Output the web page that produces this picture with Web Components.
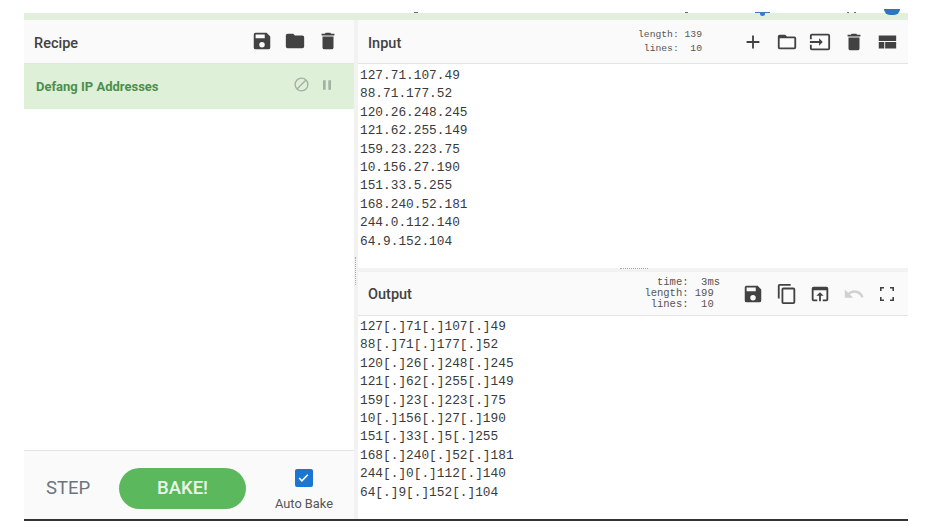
<!DOCTYPE html>
<html>
<head>
<meta charset="utf-8">
<title>CyberChef</title>
<style>
html, body { margin: 0; padding: 0; background: #fff; }
body { width: 940px; height: 529px; overflow: hidden; font-family: Roboto, sans-serif; }
</style>
</head>
<body>
<cc-app></cc-app>
<script>
const ICONS = {
    save: `<path d="M17 3H5a2 2 0 0 0-2 2v14a2 2 0 0 0 2 2h14a2 2 0 0 0 2-2V7l-4-4zm-5 16a3 3 0 1 1 0-6 3 3 0 0 1 0 6zm3-10H5V5h10v4z"/>`,
    folder: `<path d="M10 4H4a2 2 0 0 0-2 2v12a2 2 0 0 0 2 2h16a2 2 0 0 0 2-2V8a2 2 0 0 0-2-2h-8l-2-2z"/>`,
    delete: `<path d="M6 19a2 2 0 0 0 2 2h8a2 2 0 0 0 2-2V7H6v12zM19 4h-3.500l-1-1h-5l-1 1H5v2h14V4z"/>`,
    block: `<path d="M12 2a10 10 0 1 0 0 20 10 10 0 0 0 0-20zM4 12a8 8 0 0 1 8-8c1.850 0 3.550.630 4.900 1.690L5.690 16.900A7.900 7.900 0 0 1 4 12zm8 8a7.900 7.900 0 0 1-4.900-1.690L18.310 7.100A7.900 7.900 0 0 1 20 12a8 8 0 0 1-8 8z"/>`,
    pause: `<path d="M6 19h4V5H6v14zm8-14v14h4V5h-4z"/>`,
    add: `<path d="M19 13h-6v6h-2v-6H5v-2h6V5h2v6h6v2z"/>`,
    folderOpen: `<path d="M20 6h-8l-2-2H4a2 2 0 0 0-2 2v12a2 2 0 0 0 2 2h16a2 2 0 0 0 2-2V8a2 2 0 0 0-2-2zm0 12H4V8h16v10z"/>`,
    input: `<path d="M21 3.010H3a2 2 0 0 0-2 2V9h2V4.990h18v14.030H3V15H1v4.010a2 2 0 0 0 2 1.980h18a2 2 0 0 0 2-1.980v-14a2 2 0 0 0-2-2zM11 16l4-4-4-4v3H1v2h10v3z"/>`,
    layout: `<path d="M3 19h6v-7H3v7zm7 0h12v-7H10v7zM3 5v6h19V5H3z"/>`,
    copy: `<path d="M16 1H4a2 2 0 0 0-2 2v14h2V3h12V1zm3 4H8a2 2 0 0 0-2 2v14a2 2 0 0 0 2 2h11a2 2 0 0 0 2-2V7a2 2 0 0 0-2-2zm0 16H8V7h11v14z"/>`,
    openBrowser: `<path d="M19 4H5a2 2 0 0 0-2 2v12a2 2 0 0 0 2 2h4v-2H5V8h14v10h-4v2h4a2 2 0 0 0 2-2V6a2 2 0 0 0-2-2zm-7 6-4 4h3v6h2v-6h3l-4-4z"/>`,
    undo: `<path d="M12.500 8c-2.650 0-5.050.990-6.900 2.600L2 7v9h9l-3.620-3.620A7.950 7.950 0 0 1 12.500 10.500c3.540 0 6.550 2.310 7.600 5.500l2.370-.780C21.080 11.030 17.150 8 12.500 8z"/>`,
    fullscreen: `<path d="M5 15h1.600v2.400H9V19H5v-4zM5 9V5h4v1.600H6.600V9H5zM19 15v4h-4v-1.600h2.400V15H19zM15 5h4v4h-1.600V6.600H15V5z"/>`
};

class CcIcon extends HTMLElement {
    constructor() {
        super();
        this.attachShadow({mode: "open"});
    }
    connectedCallback() {
        const size = this.getAttribute("size") || 24;
        const path = ICONS[this.getAttribute("name")] || "";
        this.shadowRoot.innerHTML = `
            <style>
                :host { display: inline-flex; width: ${size}px; height: ${size}px; color: inherit; }
                svg { width: 100%; height: 100%; fill: currentColor; display: block; }
            </style>
            <svg viewBox="0 0 24 24">${path}</svg>`;
    }
}
customElements.define("cc-icon", CcIcon);

// header row shared by recipe, input and output
class CcPaneHeader extends HTMLElement {
    constructor() {
        super();
        this.attachShadow({mode: "open"});
        this.shadowRoot.innerHTML = `
            <style>
                :host {
                    display: flex;
                    align-items: center;
                    box-sizing: border-box;
                    height: 44px;
                    padding-left: 10px;
                    background: #fafafa;
                    border-bottom: 1px solid #e4e4e4;
                    color: #424242;
                }
                .title {
                    font: 500 14.500px Roboto, sans-serif;
                    flex: 1;
                    position: relative;
                    top: 1px;
                }
                :host([low]) .title { top: 2px; }
                .actions { display: flex; align-items: center; }
            </style>
            <div class="title"><slot name="title"></slot></div>
            <slot name="info"></slot>
            <div class="actions"><slot></slot></div>`;
    }
}
customElements.define("cc-pane-header", CcPaneHeader);

class CcIoInfo extends HTMLElement {
    constructor() {
        super();
        this.attachShadow({mode: "open"});
        this.shadowRoot.innerHTML = `
            <style>
                :host {
                    display: block;
                    font-family: "Liberation Mono", monospace;
                    color: #555;
                    text-align: left;
                }
                slot { white-space: pre; }
            </style>
            <slot></slot>`;
    }
}
customElements.define("cc-io-info", CcIoInfo);

class CcTextPane extends HTMLElement {
    constructor() {
        super();
        this.attachShadow({mode: "open"});
        this.shadowRoot.innerHTML = `
            <style>
                :host {
                    display: block;
                    padding: 2px 0 0 2px;
                    font: 12.800px/18.400px "Liberation Mono", monospace;
                    color: #3a3a3a;
                    overflow: hidden;
                    box-sizing: border-box;
                }
                slot { white-space: pre; }
            </style>
            <slot></slot>`;
    }
}
customElements.define("cc-text-pane", CcTextPane);

class CcOperation extends HTMLElement {
    constructor() {
        super();
        this.attachShadow({mode: "open"});
        this.shadowRoot.innerHTML = `
            <style>
                :host {
                    display: flex;
                    align-items: center;
                    box-sizing: border-box;
                    height: 45px;
                    padding: 0 19px 0 12px;
                    background: #dff0d8;
                    color: #4c8f4d;
                }
                .name { flex: 1; font: 700 13px Roboto, sans-serif; }
                .ctl { display: flex; align-items: center; gap: 9px; color: #a3b0a3; position: relative; top: -2px; }
            </style>
            <div class="name"><slot></slot></div>
            <div class="ctl">
                <cc-icon name="block" size="17"></cc-icon>
                <cc-icon name="pause" size="16"></cc-icon>
            </div>`;
    }
}
customElements.define("cc-operation", CcOperation);

class CcControls extends HTMLElement {
    constructor() {
        super();
        this.attachShadow({mode: "open"});
        this.shadowRoot.innerHTML = `
            <style>
                :host {
                    display: flex;
                    align-items: center;
                    box-sizing: border-box;
                    height: 69px;
                    padding: 6px 0 0 22px;
                    background: #fafafa;
                    border-top: 1px solid #e4e4e4;
                }
                .step {
                    font: 400 18.500px Roboto, sans-serif;
                    color: #6c757d;
                    width: 73px;
                }
                .bake {
                    display: flex;
                    align-items: center;
                    justify-content: center;
                    width: 127px;
                    height: 41px;
                    border-radius: 21px;
                    background: #5cb85c;
                    color: #e8f5e8;
                    font: 500 18.500px Roboto, sans-serif;
                    box-sizing: border-box;
                }
                .auto {
                    display: flex;
                    flex-direction: column;
                    align-items: center;
                    margin: 3px 0 0 29px;
                    font: 400 12.800px Roboto, sans-serif;
                    color: #555;
                    gap: 9px;
                }
                .box {
                    width: 18px;
                    height: 18px;
                    border-radius: 2px;
                    background: #1976d2;
                    display: flex;
                    align-items: center;
                    justify-content: center;
                }
                .box svg { width: 13px; height: 13px; fill: none; stroke: #fff; stroke-width: 3; }
            </style>
            <div class="step">STEP</div>
            <div class="bake">BAKE!</div>
            <div class="auto">
                <div class="box"><svg viewBox="0 0 24 24"><path d="M4 13l5 5L20 7"/></svg></div>
                <div>Auto Bake</div>
            </div>`;
    }
}
customElements.define("cc-controls", CcControls);

class CcApp extends HTMLElement {
    constructor() {
        super();
        this.attachShadow({mode: "open"});
        const input = "127.71.107.49\n88.71.177.52\n120.26.248.245\n121.62.255.149\n159.23.223.75\n10.156.27.190\n151.33.5.255\n168.240.52.181\n244.0.112.140\n64.9.152.104";
        const output = input.replace(/\./g, "[.]");
        this.shadowRoot.innerHTML = `
            <style>
                :host { display: block; width: 884px; margin-left: 24px; }
                .strip { height: 13px; position: relative; }
                .strip i { position: absolute; display: block; background: #5d6f80; height: 1px; top: 12px; }
                .strip i.blue { background: #3b7cc0; }
                .band { height: 7px; background: #e2efdc; }
                .main {
                    display: grid;
                    grid-template-columns: 330px 4px 1fr;
                    height: 499px;
                    border-bottom: 2px solid #333;
                }
                .col { display: flex; flex-direction: column; min-height: 0; min-width: 0; }
                .spacer { flex: 1; }
                .gutter { background: #f2f2f2; position: relative; }
                .gutter::after {
                    content: "";
                    position: absolute;
                    left: 1px;
                    top: 237px;
                    height: 28px;
                    border-left: 1px dotted #aaa;
                }
                .input { height: 204px; padding-top: 3px; }
                .divider {
                    height: 4px;
                    background: #f2f2f2;
                    position: relative;
                }
                .divider::after {
                    content: "";
                    position: absolute;
                    left: 262px;
                    top: 0;
                    width: 28px;
                    border-top: 1px dotted #aaa;
                }
                .output { flex: 1; padding-top: 2px; }
                .recipe-actions { display: flex; gap: 11px; padding-right: 15px; align-items: center; position: relative; top: -1px; }
                .input-actions { display: flex; gap: 11.500px; padding-right: 10px; margin-left: 40px; align-items: center; }
                .output-actions { display: flex; gap: 11.500px; padding-right: 10px; margin-left: 22px; align-items: center; }
                .dim { color: #d0d0d0; }
                .wide { margin: 0 -1px; }
                #iinfo { font-size: 9.700px; line-height: 14px; margin-top: 1px; }
                #oinfo { font-size: 10.500px; line-height: 11px; }
            </style>
            <div class="strip">
                <i style="left:390px;width:4px"></i>
                <i style="left:661px;width:3px"></i>
                <i class="blue" style="left:731px;width:15px"></i>
                <i class="blue" style="left:736px;top:13px;width:5px;height:3px;border-radius:0 0 3px 3px"></i>
                <i style="left:823px;width:2px"></i>
                <i style="left:830px;width:2px"></i>
                <i class="blue" style="left:860px;top:9px;width:16px;height:6px;border-radius:0 0 9px 9px;background:#2f74bd"></i>
            </div>
            <div class="band"></div>
            <div class="main">
                <div class="col">
                    <cc-pane-header low>
                        <span slot="title">Recipe</span>
                        <div class="recipe-actions">
                            <cc-icon name="save" size="22"></cc-icon>
                            <cc-icon name="folder" size="22"></cc-icon>
                            <cc-icon name="delete" size="22"></cc-icon>
                        </div>
                    </cc-pane-header>
                    <cc-operation>Defang IP Addresses</cc-operation>
                    <div class="spacer"></div>
                    <cc-controls></cc-controls>
                </div>
                <div class="gutter"></div>
                <div class="col">
                    <cc-pane-header low>
                        <span slot="title">Input</span>
                        <cc-io-info id="iinfo" slot="info">length: 139
 lines:  10</cc-io-info>
                        <div class="input-actions">
                            <cc-icon name="add" size="22"></cc-icon>
                            <cc-icon name="folderOpen" size="22"></cc-icon>
                            <cc-icon name="input" size="22"></cc-icon>
                            <cc-icon name="delete" size="22"></cc-icon>
                            <cc-icon name="layout" size="22"></cc-icon>
                        </div>
                    </cc-pane-header>
                    <cc-text-pane class="input">${input}</cc-text-pane>
                    <div class="divider"></div>
                    <cc-pane-header>
                        <span slot="title">Output</span>
                        <cc-io-info id="oinfo" slot="info">  time:  3ms
length: 199
 lines:  10</cc-io-info>
                        <div class="output-actions">
                            <cc-icon name="save" size="22"></cc-icon>
                            <cc-icon name="copy" size="22"></cc-icon>
                            <cc-icon name="openBrowser" size="22"></cc-icon>
                            <cc-icon class="dim" name="undo" size="22"></cc-icon>
                            <cc-icon class="wide" name="fullscreen" size="24"></cc-icon>
                        </div>
                    </cc-pane-header>
                    <cc-text-pane class="output">${output}</cc-text-pane>
                </div>
            </div>`;
    }
}
customElements.define("cc-app", CcApp);
</script>
</body>
</html>
